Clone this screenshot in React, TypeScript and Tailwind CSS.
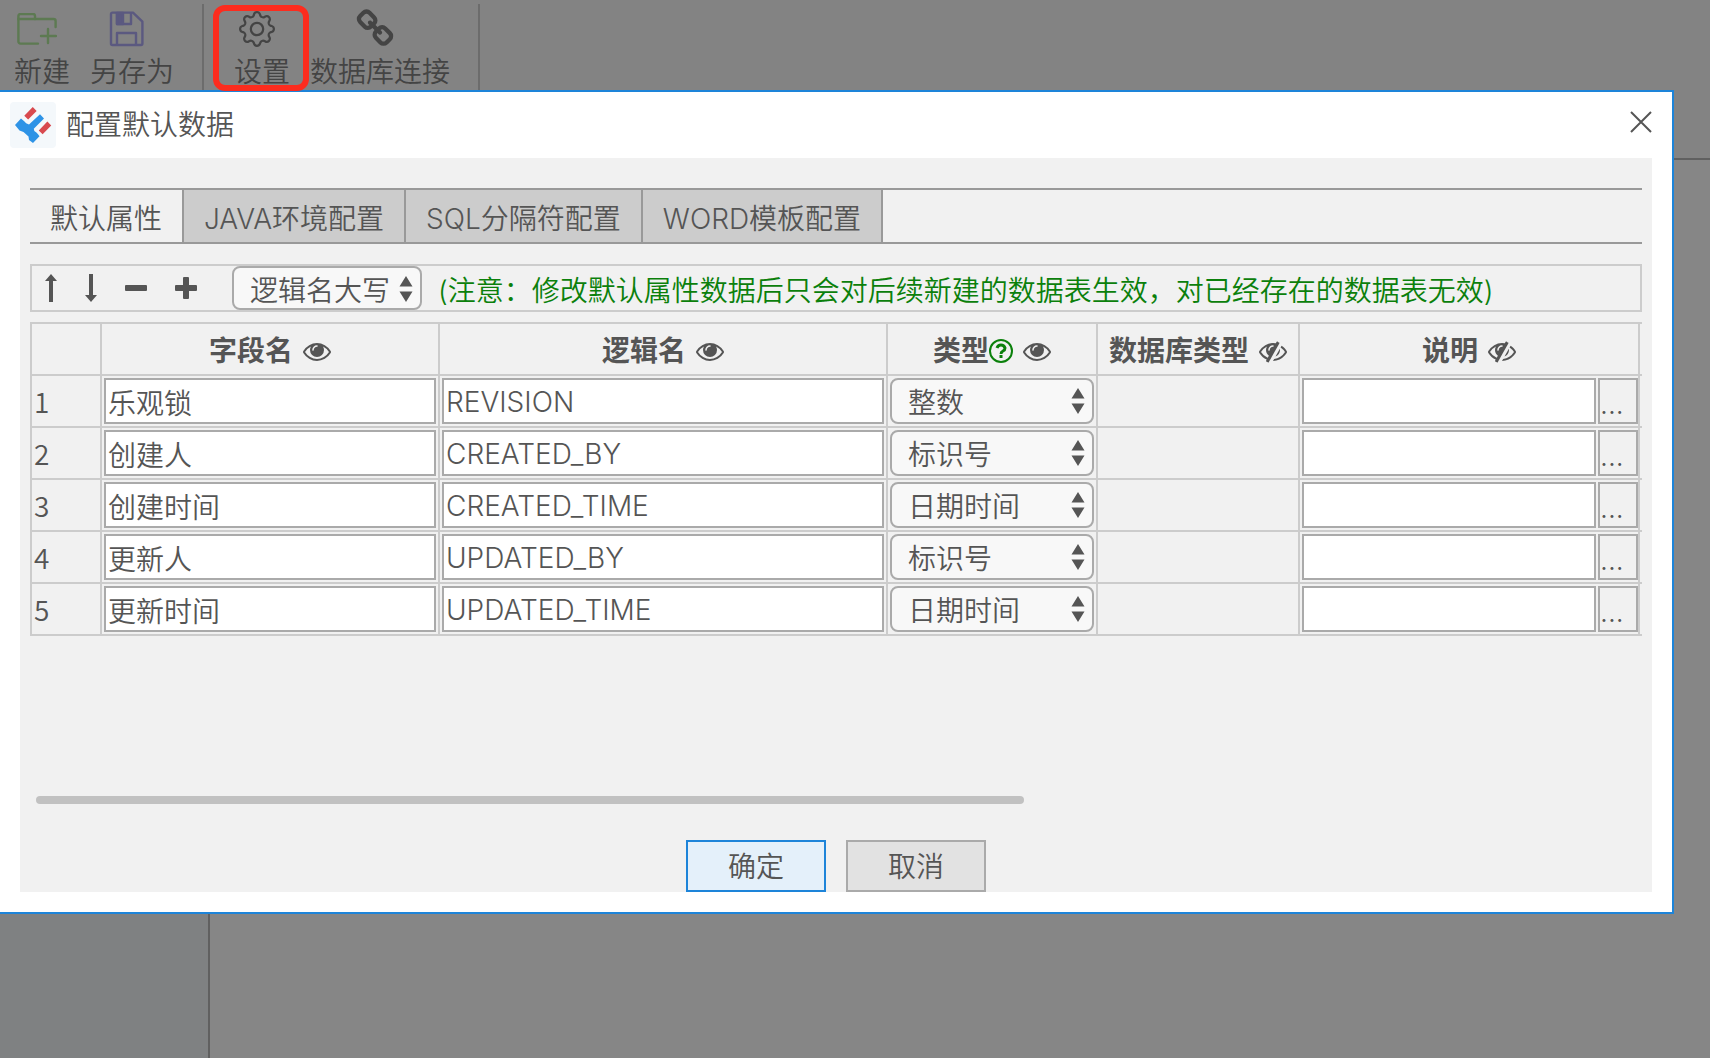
import { useState } from 'react'
import type { ReactNode } from 'react'
import { BsGear } from 'react-icons/bs'

type Field = {
  name:  string
  logic: string
  type:  string
}

const FIELDS: Field[] = [
  { name: '乐观锁',   logic: 'REVISION',     type: '整数' },
  { name: '创建人',   logic: 'CREATED_BY',   type: '标识号' },
  { name: '创建时间', logic: 'CREATED_TIME', type: '日期时间' },
  { name: '更新人',   logic: 'UPDATED_BY',   type: '标识号' },
  { name: '更新时间', logic: 'UPDATED_TIME', type: '日期时间' },
]

const TYPES = ['整数', '标识号', '日期时间']
const TABS  = ['默认属性', 'JAVA环境配置', 'SQL分隔符配置', 'WORD模板配置']

const EYE =
  'M1664 960q-152-236-381-353 61 104 61 225 0 185-131.5 316.5t-316.5 131.5-316.5-131.5-131.5-316.5q0-121 61-225-229 117-381 353 133 205 333.5 326.5t434.5 121.5 434.5-121.5 333.5-326.5zm-720-384q0-20-14-34t-34-14q-125 0-214.5 89.5t-89.5 214.5q0 20 14 34t34 14 34-14 14-34q0-86 61-147t147-61q20 0 34-14t14-34zm848 384q0 34-20 69-140 230-376.5 368.5t-499.5 138.5-499.5-139-376.5-368q-20-35-20-69t20-69q140-229 376.5-368t499.5-139 499.5 139 376.5 368q20 35 20 69z'
const EYE_OFF =
  'M555 1335l78-141q-87-63-136-159t-49-203q0-121 61-225-229 117-381 353 167 258 427 375zm389-759q0-20-14-34t-34-14q-125 0-214.5 89.5t-89.5 214.5q0 20 14 34t34 14 34-14 14-34q0-86 61-147t147-61q20 0 34-14t14-34zm363-191q0 7-1 9-106 189-316 567t-315 566l-49 89q-10 16-28 16-12 0-134-70-16-10-16-28 0-12 44-87-143-65-263.5-173t-208.5-245q-20-31-20-69t20-69q153-235 380-371t496-136q89 0 180 17l54-97q10-16 28-16 5 0 18 6t31 15.5 33 18.5 31.5 18.5 19.5 11.5q16 10 16 27zm37 447q0 139-79 253.5t-209 164.5l280-502q8 45 8 84zm448 128q0 35-20 69-39 64-109 145-150 172-347.5 267t-419.5 95l74-132q212-18 392.5-137t301.5-307q-115-179-282-294l63-112q95 64 182.5 153t144.5 184q20 34 20 69z'
const CHAIN =
  'M1520 1216q0-40-28-68l-208-208q-28-28-68-28-42 0-72 32 3 3 19 18.5t21.5 21.5 15 19 13 25.5 3.5 27.5q0 40-28 68t-68 28q-15 0-27.5-3.5t-25.5-13-19-15-21.5-21.5-18.5-19q-33 31-33 73 0 40 28 68l206 207q27 27 68 27 40 0 68-26l147-146q28-28 28-67zm-703-705q0-40-28-68l-206-207q-28-28-68-28-39 0-68 27l-147 146q-28 28-28 67 0 40 28 68l208 208q27 27 68 27 42 0 72-31-3-3-19-18.5t-21.5-21.5-15-19-13-25.5-3.5-27.5q0-40 28-68t68-28q15 0 27.5 3.5t25.5 13 19 15 21.5 21.5 18.5 19q33-31 33-73zm895 705q0 120-85 203l-147 146q-83 83-203 83-121 0-204-85l-206-207q-83-83-83-203 0-123 88-209l-88-88q-86 88-208 88-120 0-204-84l-208-208q-84-84-84-204t85-203l147-146q83-83 203-83 121 0 204 85l206 207q83 83 83 203 0 123-88 209l88 88q86-88 208-88 120 0 204 84l208 208q84 84 84 204z'

function Glyph({ d, className }: { d: string; className: string }) {
  return (
    <svg viewBox="0 0 1792 1792" fill="currentColor" className={className} aria-hidden="true">
      <path d={d} />
    </svg>
  )
}

function FolderAddIcon() {
  return (
    <svg viewBox="0 0 40 32" className="h-8 w-10" fill="none" stroke="#5d7a52" strokeWidth="2.4" strokeLinecap="round" strokeLinejoin="round" aria-hidden="true">
      <path d="M21 30.600H3.400a2 2 0 0 1-2-2V3a2 2 0 0 1 2-2H16a2 2 0 0 1 2 2v3h18.600a2 2 0 0 1 2 2v6" />
      <path d="M1.400 6H18M31 16v14M24 23h15" />
    </svg>
  )
}

function SaveIcon() {
  return (
    <svg viewBox="0 0 36 36" className="size-9" fill="none" stroke="#5b5980" strokeWidth="2.4" strokeLinejoin="round" aria-hidden="true">
      <path d="M3.400 1.600H24l9.400 9v22a1.400 1.400 0 0 1-1.400 1.400H3.400A1.400 1.400 0 0 1 2 32.600V3a1.400 1.400 0 0 1 1.400-1.400z" />
      <path d="M8 34V22h19v12M8 2v11h14V2" />
      <path d="M8 2h6v11H8z" fill="#5b5980" />
    </svg>
  )
}

function LogoIcon() {
  return (
    <svg viewBox="0 0 46 46" className="size-[46px] shrink-0" aria-hidden="true">
      <rect width="46" height="46" rx="4" fill="#f4f8fb" />
      <path d="M16.200 15.700L24.700 7M30.700 30.300L39.300 21.500" stroke="#d84a4f" strokeWidth="5.400" />
      <path d="M5 23l6-6.500 3.500 3q1 2 4.500 3L30 12.300l4 4.200L23.800 26.700q.2 2.500 1.500 3 1.500.5 4.200 4.600L23 41l-4-3-.5-3.500-5-4.500-4-1.500z" fill="#2e93e6" />
    </svg>
  )
}

function ToolItem({ icon, label }: { icon: ReactNode; label: string }) {
  return (
    <button type="button" className="flex flex-col items-center pt-[7px]">
      <span className="flex h-11 items-center justify-center pr-[10px]">{icon}</span>
      <span className="mt-[5px] leading-8">{label}</span>
    </button>
  )
}

function Select({ label, value, options, className }: { label: string; value: string; options: string[]; className: string }) {
  return (
    <span className={`relative block ${className}`}>
      <select
        aria-label={label}
        defaultValue={value}
        className="block h-full w-full appearance-none rounded-lg border-2 border-[#aaa] bg-[#f8f8f8] pt-[3px] pl-4 outline-none"
      >
        {options.map(o => <option key={o}>{o}</option>)}
      </select>
      <svg viewBox="0 0 14 26" className="pointer-events-none absolute top-[10px] right-[9px] h-[26px] w-[14px]" fill="currentColor" aria-hidden="true">
        <path d="M7 0l6.500 10.500H.5zM7 26l6.500-10.500H.5z" />
      </svg>
    </span>
  )
}

function HeadCell({ label, visible, help }: { label: string; visible: boolean; help?: boolean }) {
  return (
    <th className="border-t-2 border-r-2 border-b-2 border-[#ccc] p-0 font-bold">
      <span className="flex items-center justify-center pt-[3px]">
        {label}
        {help && (
          <svg viewBox="0 0 24 24" className="size-6" fill="none" stroke="#0b800b" aria-hidden="true">
            <circle cx="12" cy="12" r="11" strokeWidth="2" />
            <path d="M8 9q1-3 4-3t4 3q0 2-2 3t-2 3" strokeWidth="3" />
            <path d="M12 16v3" strokeWidth="3" />
          </svg>
        )}
        <Glyph d={visible ? EYE : EYE_OFF} className="ml-[10px] size-7" />
      </span>
    </th>
  )
}

function FieldRow({ f, index }: { f: Field; index: number }) {
  const cell = 'border-r-2 border-b-2 border-[#ccc] p-[2px]'
  const box  = 'block h-[46px] w-full border-2 border-[#aaa] bg-white px-[2px] pt-[2px] outline-none'
  return (
    <tr className="h-[52px]">
      <td className="border-r-2 border-b-2 border-l-2 border-[#ccc] p-0 pl-[2px] font-['Noto_Sans_CJK_SC',sans-serif]">{index}</td>
      <td className={cell}><input aria-label="字段名" defaultValue={f.name} className={box} /></td>
      <td className={cell}><input aria-label="逻辑名" defaultValue={f.logic} className={box} /></td>
      <td className={cell}><Select label="类型" value={f.type} options={TYPES} className="h-[46px]" /></td>
      <td className={cell} />
      <td className="border-r-2 border-b-2 border-[#ccc] py-[2px] pl-[2px]">
        <div className="flex gap-[2px]">
          <input aria-label="说明" className={`${box} min-w-0 flex-1`} />
          <button type="button" className="h-[46px] w-10 shrink-0 border-2 border-[#aaa] pt-[6px] text-left leading-9">...</button>
        </div>
      </td>
      <td className="border-b-2 border-[#ccc] p-0" />
    </tr>
  )
}

export default function App() {
  const [tab, setTab] = useState(TABS[0])

  return (
    <div className="flex min-h-screen flex-col bg-[#868686] font-[Inter,'Noto_Sans_CJK_SC',sans-serif] text-[28px] leading-10 font-[350] text-[#555]">
      {/* Dimmed main toolbar */}
      <header className="flex h-[90px] items-start bg-[#838383] text-[#444]">
        <div className="flex gap-5 px-[14px]">
          <ToolItem icon={<FolderAddIcon />} label="新建" />
          <ToolItem icon={<SaveIcon />} label="另存为" />
        </div>
        <div className="mt-1 ml-[14px] h-[86px] w-[2px] bg-[#6c6c6c]" />
        <div className="relative ml-[30px]">
          <ToolItem icon={<BsGear className="size-9" />} label="设置" />
          <div className="absolute top-[5px] -left-[21px] z-10 h-[86px] w-24 rounded-xl border-6 border-[#fc2c1e]" />
        </div>
        <div className="ml-5">
          <ToolItem icon={<Glyph d={CHAIN} className="size-10" />} label="数据库连接" />
        </div>
        <div className="mt-1 ml-7 h-[86px] w-[2px] bg-[#6c6c6c]" />
      </header>

      <div className="flex">
        <main className="min-w-0 flex-1 border-t-2 border-r-2 border-b-2 border-[#1d84d9] bg-white pr-5 pb-5 pl-5">
          <div className="-ml-[10px] flex h-[66px] items-center">
            <LogoIcon />
            <h1 className="ml-[10px] flex-1">配置默认数据</h1>
            <button type="button" aria-label="关闭" className="pb-[6px]">
              <svg viewBox="0 0 22 22" className="size-[22px]" stroke="currentColor" strokeWidth="2" aria-hidden="true">
                <path d="M1 1l20 20M21 1L1 21" />
              </svg>
            </button>
          </div>

          <div className="bg-[#f1f1f1] px-[10px] pt-[30px]">
            <div role="tablist" className="flex h-14 border-y-2 border-[#999]">
              {TABS.map(t => (
                <button
                  key={t}
                  type="button"
                  role="tab"
                  aria-selected={t === tab}
                  onClick={() => setTab(t)}
                  className={`border-r-2 border-[#999] px-5 pt-[6px] ${t === tab ? '' : 'bg-[#ccc]'}`}
                >
                  {t}
                </button>
              ))}
            </div>

            {/* Row actions */}
            <div className="mt-5 flex h-12 items-center border-2 border-[#ccc]">
              <button type="button" aria-label="上移" className="ml-3">
                <svg viewBox="0 0 14 28" className="h-7 w-[14px]" fill="currentColor" aria-hidden="true">
                  <path d="M7 0l6 7H9v21H5V7H1z" />
                </svg>
              </button>
              <button type="button" aria-label="下移" className="ml-[26px]">
                <svg viewBox="0 0 14 28" className="h-7 w-[14px]" fill="currentColor" aria-hidden="true">
                  <path d="M7 28l6-7H9V0H5v21H1z" />
                </svg>
              </button>
              <button type="button" aria-label="删除" className="ml-[26px]">
                <svg viewBox="0 0 24 24" className="size-6" fill="currentColor" aria-hidden="true">
                  <rect x="1" y="9" width="22" height="6" rx="1" />
                </svg>
              </button>
              <button type="button" aria-label="新增" className="ml-[26px]">
                <svg viewBox="0 0 24 24" className="size-6" fill="currentColor" aria-hidden="true">
                  <rect x="1" y="9" width="22" height="6" rx="1" />
                  <rect x="9" y="1" width="6" height="22" rx="1" />
                </svg>
              </button>
              <Select label="逻辑名格式" value="逻辑名大写" options={['逻辑名大写', '逻辑名小写']} className="ml-[34px] h-11 w-[190px] shrink-0" />
              <span className="ml-4 pt-[6px] whitespace-nowrap text-[#0b800b]">
                (注意：修改默认属性数据后只会对后续新建的数据表生效，对已经存在的数据表无效)
              </span>
            </div>

            <div className="mt-[10px] h-[474px]">
              <table className="w-full table-fixed border-separate border-spacing-0">
                <colgroup>
                  <col className="w-[72px]" />
                  <col className="w-[338px]" />
                  <col className="w-[448px]" />
                  <col className="w-[210px]" />
                  <col className="w-[202px]" />
                  <col />
                  <col className="w-[2px]" />
                </colgroup>
                <thead>
                  <tr className="h-[54px]">
                    <th className="border-2 border-[#ccc] p-0" />
                    <HeadCell label="字段名" visible />
                    <HeadCell label="逻辑名" visible />
                    <HeadCell label="类型" visible help />
                    <HeadCell label="数据库类型" visible={false} />
                    <HeadCell label="说明" visible={false} />
                    <th className="border-y-2 border-[#ccc] p-0" />
                  </tr>
                </thead>
                <tbody>
                  {FIELDS.map((f, i) => <FieldRow key={f.logic} f={f} index={i + 1} />)}
                </tbody>
              </table>
            </div>

            {/* Horizontal scroll thumb */}
            <div className="ml-[6px] h-2 w-[61.3%] rounded-full bg-[#c1c1c1]" />

            <div className="mt-9 flex justify-center gap-5">
              <button type="button" className="h-[52px] w-[140px] border-2 border-[#1d84d9] bg-[#e4f0fa] pt-[2px]">确定</button>
              <button type="button" className="h-[52px] w-[140px] border-2 border-[#aaa] bg-[#e2e2e2] pt-[2px]">取消</button>
            </div>
          </div>
        </main>
        <aside className="w-9">
          <div className="h-[70px] border-b-2 border-[#606060] bg-[#838383]" />
        </aside>
      </div>

      <div className="flex flex-1">
        <div className="w-[210px] border-r-2 border-[#606060] bg-[#7f8182]" />
      </div>
    </div>
  )
}
